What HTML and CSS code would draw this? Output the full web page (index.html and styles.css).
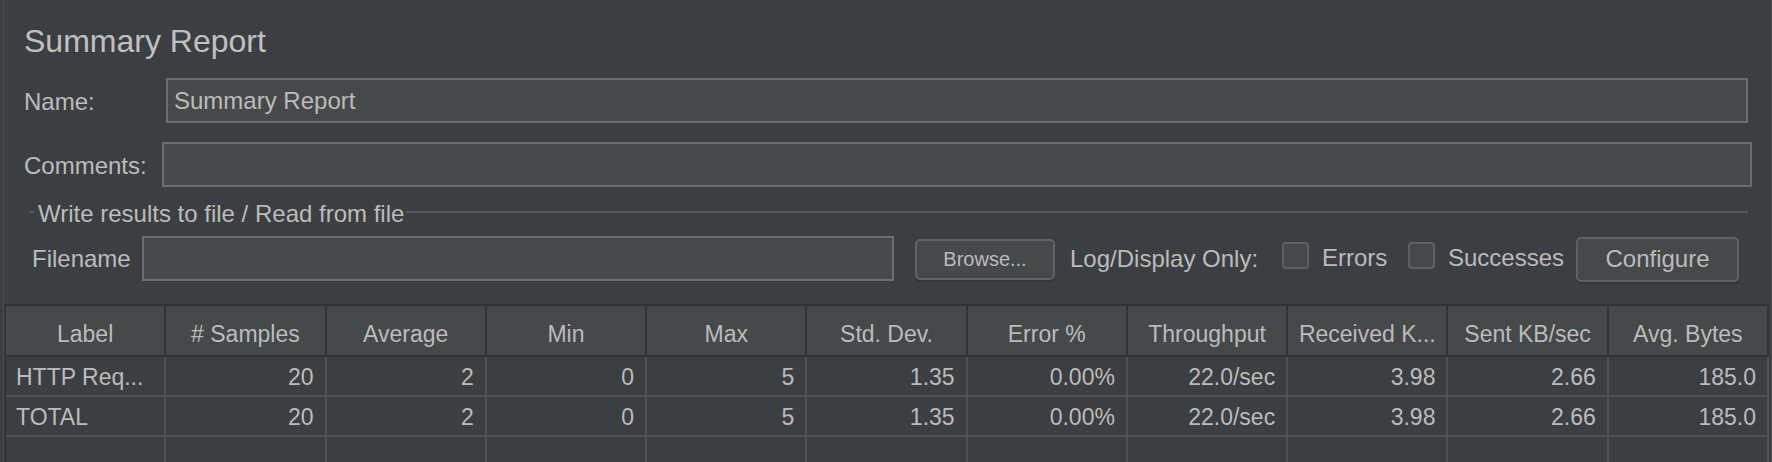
FILE: index.html
```html
<!DOCTYPE html>
<html lang="en">
<head>
<meta charset="utf-8">
<title>Summary Report</title>
<link rel="stylesheet" href="styles.css">
</head>
<body>
<div class="panel">
  <h1 class="title">Summary Report</h1>
  <div class="row row-name">
    <span class="lbl lbl-name">Name:</span>
    <div class="field field-name">Summary Report</div>
  </div>
  <div class="row row-comments">
    <span class="lbl lbl-comments">Comments:</span>
    <div class="field field-comments"></div>
  </div>
  <div class="group">
    <div class="group-head">
      <span class="gline gline-left"></span>
      <span class="group-title">Write results to file / Read from file</span>
      <span class="gline gline-right"></span>
    </div>
    <div class="file-row">
      <span class="lbl lbl-file">Filename</span>
      <div class="field field-file"></div>
      <div class="btn btn-browse">Browse...</div>
      <span class="lbl lbl-log">Log/Display Only:</span>
      <span class="check"></span>
      <span class="lbl lbl-errors">Errors</span>
      <span class="check"></span>
      <span class="lbl lbl-succ">Successes</span>
      <div class="btn btn-config">Configure</div>
    </div>
  </div>
  <div class="report">
    <div class="hcell">Label</div>
    <div class="hcell"># Samples</div>
    <div class="hcell">Average</div>
    <div class="hcell">Min</div>
    <div class="hcell">Max</div>
    <div class="hcell">Std. Dev.</div>
    <div class="hcell">Error %</div>
    <div class="hcell">Throughput</div>
    <div class="hcell">Received K...</div>
    <div class="hcell">Sent KB/sec</div>
    <div class="hcell">Avg. Bytes</div>

    <div class="cell cell-label">HTTP Req...</div>
    <div class="cell">20</div>
    <div class="cell">2</div>
    <div class="cell">0</div>
    <div class="cell">5</div>
    <div class="cell">1.35</div>
    <div class="cell">0.00%</div>
    <div class="cell">22.0/sec</div>
    <div class="cell">3.98</div>
    <div class="cell">2.66</div>
    <div class="cell">185.0</div>

    <div class="cell cell-label">TOTAL</div>
    <div class="cell">20</div>
    <div class="cell">2</div>
    <div class="cell">0</div>
    <div class="cell">5</div>
    <div class="cell">1.35</div>
    <div class="cell">0.00%</div>
    <div class="cell">22.0/sec</div>
    <div class="cell">3.98</div>
    <div class="cell">2.66</div>
    <div class="cell">185.0</div>

    <div class="cell"></div>
    <div class="cell"></div>
    <div class="cell"></div>
    <div class="cell"></div>
    <div class="cell"></div>
    <div class="cell"></div>
    <div class="cell"></div>
    <div class="cell"></div>
    <div class="cell"></div>
    <div class="cell"></div>
    <div class="cell"></div>
  </div>
</div>
</body>
</html>
```
FILE: styles.css
```css
html, body {
  margin: 0;
  padding: 0;
  background: #3c3f41;
}
body {
  width: 1772px;
  height: 462px;
  overflow: hidden;
  font-family: "Liberation Sans", Arial, Helvetica, sans-serif;
  color: #bbbbbb;
}
.panel {
  margin-left: 3px;
  width: 1769px;
  height: 462px;
  box-sizing: border-box;
  border-left: 1px solid #4b4e50;
  border-right: 1px solid #4b4e50;
  padding-top: 22px;
}
.title {
  margin: 0;
  padding-left: 20px;
  font-size: 32px;
  font-weight: normal;
  line-height: 38px;
  color: #c0c0c0;
}
.row {
  display: flex;
  align-items: center;
  height: 45px;
}
.row-name { margin-top: 18px; }
.row-comments { margin-top: 19px; }
.lbl {
  font-size: 24px;
  line-height: 28px;
  white-space: nowrap;
  box-sizing: border-box;
  flex: none;
}
.lbl-name { width: 162px; padding-left: 20px; margin-top: 2px; }
.lbl-comments { width: 158px; padding-left: 20px; margin-top: 2px; }
.field {
  flex: none;
  height: 45px;
  box-sizing: border-box;
  border: 2px solid #6b6d6f;
  background: #45494a;
  font-size: 24px;
  display: flex;
  align-items: center;
  padding-left: 6px;
  color: #bbbbbb;
}
.field-name { width: 1582px; }
.field-comments { width: 1590px; }
.group { margin-top: 13px; }
.group-head {
  display: flex;
  align-items: flex-start;
  height: 28px;
  font-size: 24px;
  line-height: 28px;
}
.gline {
  height: 2px;
  background: #545658;
  margin-top: 11px;
}
.gline-left { margin-left: 25px; width: 5px; flex: none; }
.group-title { margin-left: 4px; white-space: nowrap; }
.gline-right { flex: 1; margin-left: 2px; margin-right: 23px; }
.file-row {
  display: flex;
  align-items: center;
  height: 46px;
  margin-top: 8px;
}
.lbl-file { width: 138px; padding-left: 28px; }
.field-file { width: 752px; align-self: flex-start; }
.btn {
  flex: none;
  box-sizing: border-box;
  border: 2px solid #5f6264;
  border-radius: 5px;
  background: #45494a;
  box-shadow: 0 2px 1px #333537;
  display: flex;
  align-items: center;
  justify-content: center;
  color: #bbbbbb;
}
.btn-browse {
  margin-left: 21px;
  width: 140px;
  height: 41px;
  font-size: 20px;
}
.lbl-log { margin-left: 15px; width: 212px; }
.check {
  flex: none;
  width: 27px;
  height: 27px;
  box-sizing: border-box;
  border: 2px solid #5d6062;
  border-radius: 4px;
  background: #43494a;
  align-self: flex-start;
  margin-top: 6px;
}
.lbl-errors { margin-left: 13px; width: 86px; margin-bottom: 2px; }
.lbl-succ { margin-left: 13px; width: 128px; margin-bottom: 2px; }
.btn-config {
  width: 163px;
  height: 45px;
  font-size: 24px;
}
.report {
  display: grid;
  grid-template-columns: repeat(11, 1fr);
  width: 1765px;
  box-sizing: border-box;
  margin-top: 22px;
  border-top: 2px solid #313335;
  border-left: 2px solid #313335;
  font-size: 23px;
}
.hcell {
  height: 51px;
  box-sizing: border-box;
  background: #45494a;
  border-right: 2px solid #323436;
  border-bottom: 2px solid #323436;
  text-align: center;
  padding-top: 8px;
  line-height: 41px;
  white-space: nowrap;
  overflow: hidden;
}
.cell {
  height: 40px;
  box-sizing: border-box;
  background: #3c3f41;
  border-right: 2px solid #4f5254;
  border-bottom: 2px solid #4f5254;
  text-align: right;
  padding-right: 11px;
  padding-top: 2px;
  line-height: 36px;
  white-space: nowrap;
  overflow: hidden;
}
.cell-label {
  text-align: left;
  padding-left: 10px;
  padding-right: 0;
}
```
